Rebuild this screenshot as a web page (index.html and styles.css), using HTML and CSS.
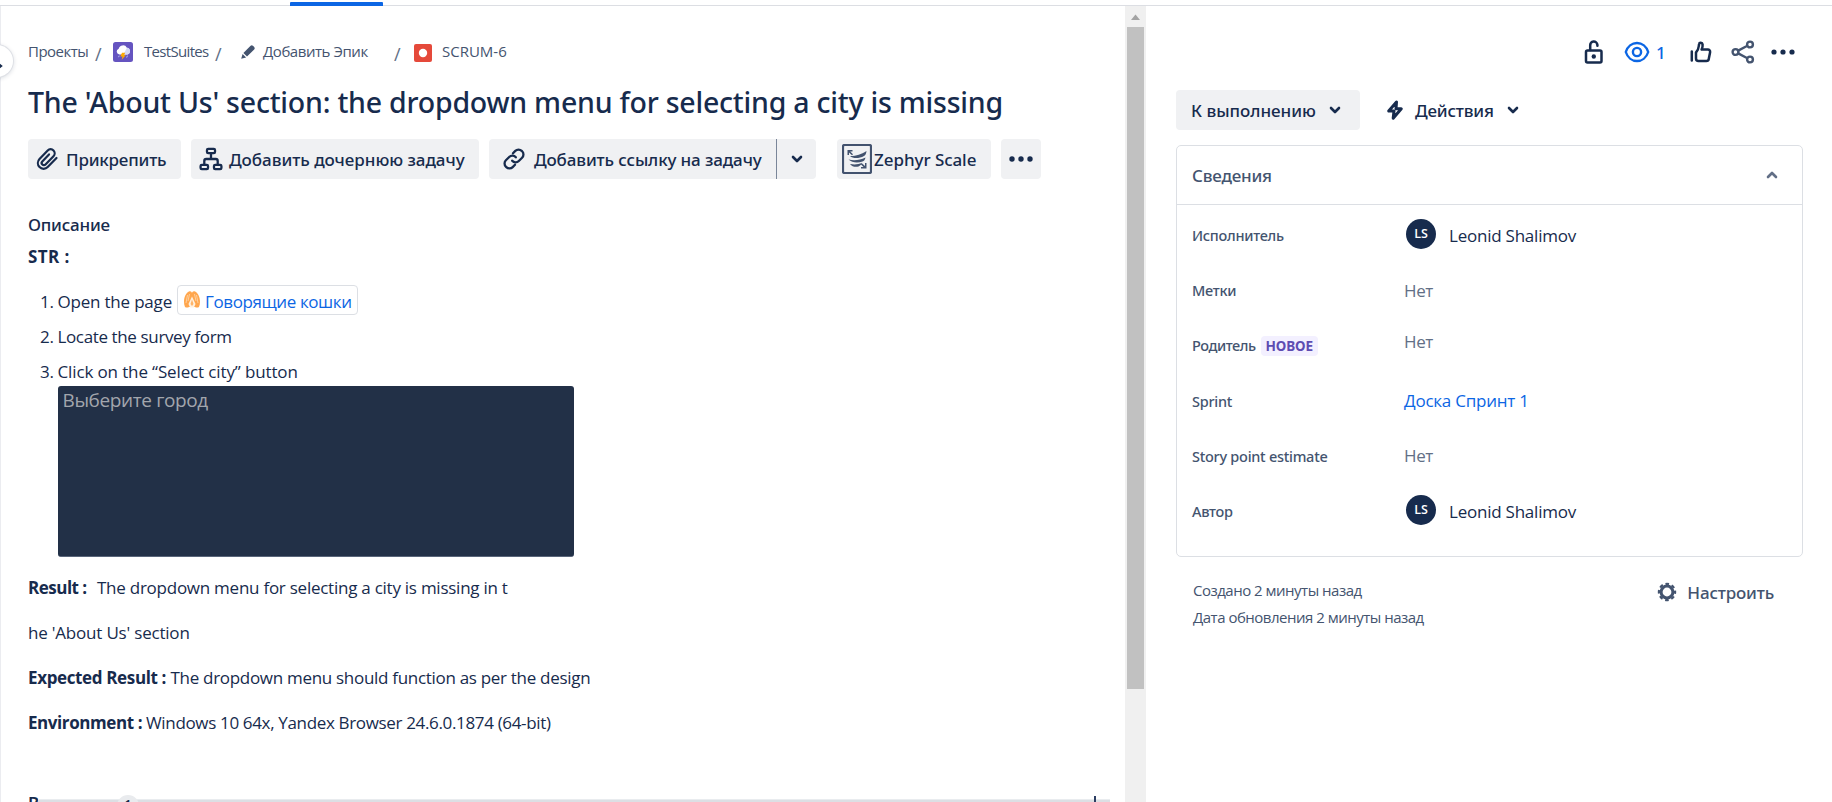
FILE: index.html
```html
<!DOCTYPE html>
<html lang="ru">
<head>
<meta charset="utf-8">
<title>SCRUM-6</title>
<link rel="stylesheet" href="styles.css">
</head>
<body>
<header class="topbar"><div class="tab-indicator"></div></header>
<div class="layout">
  <button class="expander"><svg width="14" height="14" viewBox="0 0 14 14"><path d="M4 3l5 4-5 4" fill="none" stroke="currentColor" stroke-width="2.2" stroke-linecap="round"/></svg></button>
  <main class="issue">
    <nav class="crumbs">
      <a class="c-projects">Проекты</a><i>/</i>
      <svg class="c-avatar" width="20" height="20" viewBox="0 0 20 20"><rect width="20" height="20" rx="2.5" fill="#6554c0"/><path d="M6.3 12.5a3 3 0 0 1-.6-5.8 4.4 4.4 0 0 1 8.2-.9 3.4 3.4 0 0 1 .4 6.7z" fill="#fff"/><path d="M14 5.8a3.4 3.4 0 0 1 .3 6.7l-4 0z" fill="#d5daf6"/><path d="M9 10.8h3.2L11 13.2h1.8L8.7 17.8l.8-3.2H7.3z" fill="#ffab00"/><path d="M14.4 13.6l-.7 2M6.2 13.6l-.6 1.6" stroke="#b3bdf5"/></svg>
      <a class="c-suite">TestSuites</a><i>/</i>
      <svg class="c-pencil" width="16" height="16" viewBox="0 0 16 16"><path d="M10.6 1.8a1.6 1.6 0 0 1 2.3 0l1.3 1.3a1.6 1.6 0 0 1 0 2.3L7 12.6 3.4 9z" fill="#44546f"/><path d="M2.6 10l3.5 3.4-4 1.2a.5.5 0 0 1-.7-.7z" fill="#44546f"/></svg>
      <a class="c-epic">Добавить Эпик</a><i class="last">/</i>
      <svg class="c-bug" width="18" height="18" viewBox="0 0 18 18"><rect width="18" height="18" rx="2" fill="#e5493a"/><circle cx="9" cy="9" r="4.2" fill="#fff"/></svg>
      <a class="c-key">SCRUM-6</a>
    </nav>
    <h1>The 'About Us' section: the dropdown menu for selecting a city is missing</h1>
    <div class="toolbar">
      <button class="btn attach"><svg width="24" height="24" viewBox="0 0 24 24" fill="none" stroke="currentColor" stroke-width="2.2" stroke-linecap="round"><path d="M21.500 11l-8.800 9a5.600 5.600 0 0 1-8.200 0 5.900 5.900 0 0 1 0-8.100l8.200-8.500a4 4 0 0 1 5.800 0 4.200 4.200 0 0 1 0 5.800l-8 8.300a2.200 2.200 0 0 1-3.200-3.100l6.700-7"/></svg><span>Прикрепить</span></button>
      <button class="btn child"><svg width="24" height="24" viewBox="0 0 24 24" fill="none" stroke="currentColor" stroke-width="2.3"><rect x="8" y="1.8" width="8" height="4.4" rx="1.2"/><rect x="1.6" y="17.8" width="7.4" height="4.4" rx="1.2"/><rect x="15" y="17.8" width="7.4" height="4.4" rx="1.2"/><path d="M12 6v6M5.3 17.5v-3.6q0-1.9 1.9-1.9h9.6q1.9 0 1.9 1.9v3.6"/></svg><span>Добавить дочернюю задачу</span></button>
      <div class="split">
        <button class="btn link"><svg width="24" height="24" viewBox="0 0 24 24" fill="none" stroke="currentColor" stroke-width="2.3" stroke-linecap="round"><path d="M11 6.200l2.300-2.300a4.500 4.500 0 0 1 6.400 0l.4.4a4.500 4.500 0 0 1 0 6.400l-3.300 3.300a4.500 4.500 0 0 1-6.600-.3M13 17.800l-2.300 2.300a4.500 4.500 0 0 1-6.400 0l-.4-.4a4.500 4.500 0 0 1 0-6.400L7.200 10a4.500 4.500 0 0 1 6.600.3"/></svg><span>Добавить ссылку на задачу</span></button>
        <button class="btn arrow"><svg class="chev" width="12" height="8" viewBox="0 0 12 8"><path d="M2 2l4 4 4-4"/></svg></button>
      </div>
      <button class="btn zephyr"><svg width="30" height="30" viewBox="0 0 30 30"><rect x="1" y="1" width="28" height="28" rx="1.5" fill="none" stroke="#42526e" stroke-width="2.200"/><g fill="#42526e"><path d="M8 12C15 12 19 10.500 24.500 7c-.3 2.800-1 4.200-2.500 5C17 14.800 11 14.800 8 12z"/><path d="M6.500 15.600C13 16.800 18 16 23.500 13.400c-.5 2.200-1.400 3.500-3 4.200C16 19.200 10 19 6.500 15.600z"/><path d="M8 20c5 .9 8.500.3 12-1.200-.6 2-1.800 3-3.500 3.700-3 .9-6.500.2-8.500-2.500z"/><path d="M5.500 6h5v1.500H8.200l2.800 2.700-1 1L7 8.500V11H5.500zM24.500 24.500H19V23h2.500l-2.700-2.700 1.100-1.100L23 22v-3h1.500z"/></g></svg><span>Zephyr Scale</span></button>
      <button class="btn more"><svg width="24" height="6" viewBox="0 0 24 6" fill="currentColor"><circle cx="3" cy="3" r="2.700"/><circle cx="12" cy="3" r="2.700"/><circle cx="21" cy="3" r="2.700"/></svg></button>
    </div>
    <h2>Описание</h2>
    <p class="str"><b>STR :</b></p>
    <ol class="steps">
      <li><em>1.</em><span class="s1">Open the page</span><a class="smart"><svg width="18" height="18" viewBox="0 0 18 18"><path d="M2 17C-.5 11 2 3 6 1.500 8 .8 8.500 2 9 3c.5-1 1-2.200 3-1.500C16 3 18.500 11 16 17c-1.500 1-3 .5-4 0H6c-1 .5-2.500 1-4 0z" fill="#ffa64d"/><path d="M4.500 5L3 13M13.500 5L15 13M6.500 4l-1.500 7M11.500 4l1.500 7" stroke="#ffd9b0" stroke-width=".8"/><path d="M9 6.500L5.500 14 7 17.500h4l1.500-3.500z" fill="#fff1e0"/><path d="M9 9.500L7.500 14 9 16l1.500-2z" fill="#ffb366"/></svg><span>Говорящие кошки</span></a></li>
      <li><em>2.</em><span class="s2">Locate the survey form</span></li>
      <li><em>3.</em><span class="s3">Click on the “Select city” button</span></li>
    </ol>
    <figure class="shot"><span>Выберите город</span></figure>
    <div class="paras">
      <p><b class="b1">Result :</b><span class="t1">The dropdown menu for selecting a city is missing in t</span></p>
      <p><span class="t2">he 'About Us' section</span></p>
      <p><b class="b3">Expected Result :</b><span class="t3">The dropdown menu should function as per the design</span></p>
      <p><b class="b4">Environment :</b><span class="t4">Windows 10 64x, Yandex Browser 24.6.0.1874 (64-bit)</span></p>
    </div>
    <section class="attachments">
      <h2>В</h2><span class="count">1</span>
      <svg class="plus" width="16" height="16" viewBox="0 0 16 16"><path d="M8 0v16M0 8h16" stroke="#2c3e63" stroke-width="2"/></svg>
      <div class="strip"></div>
    </section>
  </main>
  <div class="scrollbar"><svg width="21" height="21" viewBox="0 0 21 21"><path d="M6 14l4.500-5.500L15 14z" fill="#a3a3a3"/></svg><div class="thumb"></div></div>
  <aside class="side">
    <div class="actions">
      <svg width="20" height="26" viewBox="0 0 20 26" fill="none" stroke="#172b4d" stroke-width="2.500"><rect x="2" y="11.500" width="15.500" height="12" rx="1.500"/><path d="M6.200 11V6.500a3.600 3.600 0 0 1 7.200-.7v1" stroke-linecap="round"/><circle cx="9.800" cy="17.500" r="2.200" fill="#172b4d" stroke="none"/></svg>
      <svg class="eye" width="26" height="22" viewBox="0 0 26 22" fill="none" stroke="#0c66e4" stroke-width="2.400"><path d="M1.800 11C3.500 5.500 8 2 13 2s9.500 3.500 11.200 9C22.500 16.500 18 20 13 20S3.500 16.500 1.800 11z"/><circle cx="13" cy="11" r="4.100"/></svg>
      <span class="watch">1</span>
      <svg class="like" width="22" height="22" viewBox="0 0 22 22" fill="none" stroke="#172b4d" stroke-width="2.500" stroke-linejoin="round" stroke-linecap="round"><path d="M1.800 10.500v9M6 11.500C8 9.500 8.500 8 8.800 5l.3-2C9.300 1.300 12.300 1.200 12.600 3.500c.2 1.700-.3 3.500-1 5h6.200a2.300 2.300 0 0 1 2.300 2.700l-1.300 6.600a2.500 2.500 0 0 1-2.500 2.200H8.500A2.500 2.500 0 0 1 6 17.500z"/></svg>
      <svg class="share" width="24" height="24" viewBox="0 0 24 24" fill="none" stroke="#44546f" stroke-width="2.400"><circle cx="4.500" cy="12" r="2.900"/><circle cx="19" cy="4.500" r="2.900"/><circle cx="19" cy="19.500" r="2.900"/><path d="M7.200 10.600l9.200-4.800M7.200 13.400l9.200 4.800"/></svg>
      <svg class="dots" width="24" height="6" viewBox="0 0 24 6" fill="#172b4d"><circle cx="3" cy="3" r="2.600"/><circle cx="12" cy="3" r="2.600"/><circle cx="21" cy="3" r="2.600"/></svg>
    </div>
    <div class="status-row">
      <button class="btn status"><span>К выполнению</span><svg class="chev" width="12" height="8" viewBox="0 0 12 8"><path d="M2 2l4 4 4-4"/></svg></button>
      <svg class="bolt" width="18" height="20" viewBox="0 0 18 20" fill="none" stroke="#172b4d" stroke-width="3" stroke-linejoin="round"><path d="M10.500 2L2.700 11H8L7.200 18.200 15.300 8.800H10z"/></svg>
      <span class="act">Действия</span>
      <svg class="chev" width="12" height="8" viewBox="0 0 12 8"><path d="M2 2l4 4 4-4"/></svg>
    </div>
    <section class="panel">
      <header><span>Сведения</span><svg class="chev up" width="12" height="8" viewBox="0 0 12 8"><path d="M2 6l4-4 4 4"/></svg></header>
      <dl>
        <dt>Исполнитель</dt><dd><span class="avatar">LS</span><span class="name">Leonid Shalimov</span></dd>
        <dt>Метки</dt><dd class="none">Нет</dd>
        <dt class="l3">Родитель<span class="new">НОВОЕ</span></dt><dd class="none raised">Нет</dd>
        <dt>Sprint</dt><dd class="sprint">Доска Спринт 1</dd>
        <dt>Story point estimate</dt><dd class="none">Нет</dd>
        <dt>Автор</dt><dd><span class="avatar">LS</span><span class="name">Leonid Shalimov</span></dd>
      </dl>
    </section>
    <footer class="meta">
      <div class="dates"><p>Создано 2 минуты назад</p><p>Дата обновления 2 минуты назад</p></div>
      <div class="config"><svg width="20" height="20" viewBox="0 0 20 20" fill="none" stroke="#44546f"><circle cx="10" cy="10" r="5.900" stroke-width="3"/><circle cx="10" cy="10" r="8.100" stroke-width="2.200" stroke-dasharray="3.600 2.762" stroke-dashoffset="1.800"/></svg><span>Настроить</span></div>
    </footer>
  </aside>
</div>
</body>
</html>
```
FILE: styles.css
```css
* { box-sizing: border-box; margin: 0; padding: 0; }
html, body { height: 802px; overflow: hidden; }
body { background: #fff; color: #172b4d; font-family: "Open Sans", "Noto Sans", sans-serif; font-size: 17px; display: flex; flex-direction: column; }
button { border: 0; background: none; font: inherit; color: inherit; }
svg { flex: none; display: block; }
i, em { font-style: normal; }
span, a, b { white-space: nowrap; }
h1, h2, .btn, .act, .watch, .panel header, dt, .config, .count { font-family: "Noto Sans", "Open Sans", sans-serif; font-weight: 500; }

.topbar { height: 6px; border-bottom: 1px solid #dcdee3; flex: none; padding: 2px 0 0 290px; }
.tab-indicator { width: 93px; height: 4px; background: #0c66e4; border-radius: 1px 1px 0 0; }
.layout { flex: 1; display: flex; min-height: 0; position: relative; overflow: hidden; }
.expander { position: absolute; left: -19px; top: 39px; width: 32px; height: 32px; border-radius: 50%; background: #fff; box-shadow: 0 0 0 1px #dfe1e6, 0 1px 5px rgba(9,30,66,.2); padding: 9px 0 0 11px; }

.issue { width: 1125px; flex: none; border-left: 1px solid #ebecf0; padding: 33px 0 0 27px; overflow: hidden; }
.crumbs { display: flex; align-items: center; height: 24px; font-size: 15px; color: #44546f; }
.crumbs i { width: 7px; margin: 5px 0 0 7px; font-size: 18px; color: #626f86; }
.c-projects { width: 60px; letter-spacing: -.5px; }
.c-avatar { margin: 1px 11px 0 11px; }
.c-suite { width: 64px; letter-spacing: -.68px; }
.c-pencil { margin: 2px 7px 0 18px; }
.c-epic { width: 105px; letter-spacing: -.45px; }
.crumbs .last { margin-left: 26px; }
.c-bug { margin: 3px 10px 0 13px; }
h1 { margin-top: 19px; height: 40px; font-size: 28.5px; line-height: 40px; letter-spacing: -.22px; white-space: nowrap; }

.toolbar { display: flex; margin-top: 17px; height: 40px; }
.btn { height: 40px; display: flex; align-items: center; background: #f0f1f3; border-radius: 4px; flex: none; }
.attach { width: 153px; padding-left: 7px; letter-spacing: -.2px; }
.attach svg { margin-right: 7px; }
.child { width: 288px; margin-left: 10px; padding-left: 8px; letter-spacing: -.03px; }
.child svg { margin-right: 6px; }
.split { display: flex; margin-left: 10px; width: 327px; }
.link { width: 287px; padding-left: 13px; letter-spacing: -.13px; border-radius: 4px 0 0 4px; }
.link svg { margin-right: 8px; }
.arrow { width: 40px; border-left: 1px solid #7a8699; border-radius: 0 4px 4px 0; justify-content: center; }
.zephyr { width: 154px; margin-left: 21px; padding-left: 5px; letter-spacing: -.06px; }
.zephyr svg { margin-right: 2px; }
.more { width: 40px; margin-left: 10px; justify-content: center; }
.chev { fill: none; stroke: #172b4d; stroke-width: 2.6; stroke-linecap: round; stroke-linejoin: round; }
.chev.up { stroke: #626f86; }

h2 { font-size: 17px; line-height: 24px; letter-spacing: -.22px; }
.issue > h2 { margin-top: 34px; }
.str { margin-top: 8px; line-height: 24px; letter-spacing: .4px; }
.steps { list-style: none; margin-top: 18px; display: flex; flex-direction: column; gap: 7px; }
.steps li { display: flex; align-items: center; height: 28px; padding-left: 12px; }
.steps em { width: 17.5px; letter-spacing: -.3px; }
.s1 { width: 119.5px; letter-spacing: -.2px; }
.s2 { letter-spacing: -.37px; }
.s3 { letter-spacing: -.13px; }
.smart { display: flex; align-items: center; width: 181px; height: 30px; border: 1px solid #dcdfe4; border-radius: 4px; color: #0c66e4; padding-left: 5px; letter-spacing: -.4px; margin-top: -2px; }
.smart svg { margin: -2px 4px 0 0; }
.smart span { padding-top: 2px; }
.shot { width: 516px; height: 171px; margin: 1px 0 0 30px; background: #223047; border-radius: 3px; padding: 2px 4.5px; color: #a2a6ad; font-size: 19px; line-height: 24px; letter-spacing: -.38px; border-bottom: 1px solid #59657a; }
.paras { margin-top: 17px; display: flex; flex-direction: column; gap: 17px; }
.paras p { display: flex; line-height: 28px; height: 28px; }
.b1 { width: 69px; letter-spacing: -.5px; }
.b3 { width: 142.5px; letter-spacing: -.36px; }
.b4 { width: 118px; letter-spacing: -.42px; }
.t1 { letter-spacing: -.25px; }
.t2 { letter-spacing: -.2px; }
.t3 { letter-spacing: -.3px; }
.t4 { letter-spacing: -.34px; }

.attachments { position: relative; display: flex; margin-top: 58px; height: 26px; }
.attachments h2 { line-height: 18px; font-weight: 600; }
.count { position: absolute; left: 89px; top: 0; width: 22px; height: 22px; border-radius: 11px; background: #e9ebee; font-size: 14px; line-height: 20px; text-align: center; }
.plus { position: absolute; left: 1059px; top: 1px; }
.strip { position: absolute; left: 10px; top: 4px; width: 1072px; height: 20px; background: linear-gradient(#e9ecef 1px, #dcdfe4 1px); z-index: 0; }
.attachments .count, .attachments .plus { z-index: 1; }

.scrollbar { width: 21px; background: #f0f0f0; flex: none; }
.thumb { margin: 0 2px; height: 662px; background: #c1c1c1; }

.side { flex: none; width: 657px; margin-left: 30px; }
.actions { display: flex; align-items: center; height: 28px; margin-top: 32px; padding-left: 408px; }
.eye { margin-left: 20px; }
.watch { margin-left: 6px; width: 10px; color: #0c66e4; }
.like { margin-left: 24px; }
.share { margin-left: 19px; }
.dots { margin-left: 16px; }
.status-row { display: flex; align-items: center; height: 40px; margin-top: 24px; }
.status { width: 184px; padding-left: 15px; }
.status span { width: 124px; text-align: left; }
.status .chev { margin-left: 14px; }
.bolt { margin-left: 26px; }
.act { margin-left: 11px; width: 79px; letter-spacing: -.17px; }
.act + .chev { margin-left: 13px; }
.panel { width: 627px; height: 412px; margin-top: 15px; border: 1px solid #dcdfe4; border-radius: 5px; }
.panel header { height: 59px; border-bottom: 1px solid #dcdfe4; display: flex; align-items: center; justify-content: space-between; padding: 0 24px 0 15px; color: #44546f; letter-spacing: -.2px; }
dl { display: grid; grid-template-columns: 212px 1fr; grid-auto-rows: 55.2px; padding: 2.500px 0 0 15px; }
dt, dd { display: flex; align-items: center; }
dt { font-size: 14.5px; color: #44546f; letter-spacing: -.27px; }
.l3 { letter-spacing: -.42px; }
.new { margin: 2px 0 0 5px; width: 57px; height: 20px; border-radius: 4px; background: #f3f0ff; color: #5e4db2; font-size: 13.5px; font-weight: 700; line-height: 21px; text-align: center; letter-spacing: -.05px; }
.avatar { width: 30px; height: 30px; margin: -3px 13px 0 2px; border-radius: 50%; background: #172b4d; color: #fff; font-size: 12.500px; font-weight: 600; line-height: 30px; text-align: center; }
.name { letter-spacing: -.23px; }
.none { color: #626f86; letter-spacing: -.4px; }
.raised { padding-bottom: 8px; }
.sprint { color: #0c66e4; letter-spacing: -.23px; }
.meta { display: flex; justify-content: space-between; padding: 20px 59px 0 17px; }
.dates { font-size: 15px; line-height: 27px; color: #44546f; letter-spacing: -.5px; }
.config { display: flex; align-items: center; height: 30px; gap: 10px; color: #44546f; letter-spacing: -.17px; }
```
